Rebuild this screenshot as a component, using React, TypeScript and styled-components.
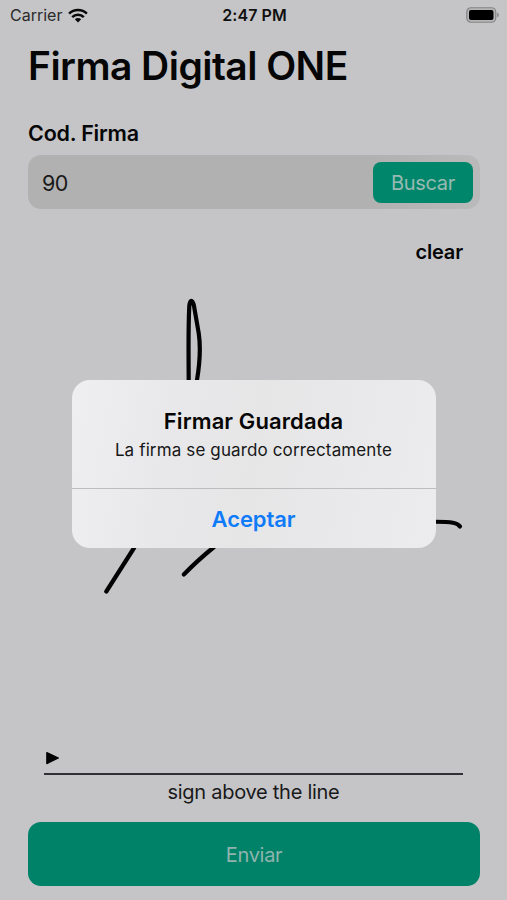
import React from "react";
import styled, { createGlobalStyle } from "styled-components";

const GlobalStyle = createGlobalStyle`
  * { box-sizing: border-box; }
  body {
    margin: 0;
    background: #c5c5c7;
    color: #060607;
    font-family: Inter, "Liberation Sans", sans-serif;
  }
  button, input { font-family: inherit; border: 0; padding: 0; margin: 0; }
`;

const Screen = styled.div`
  position: relative;
  width: 507px;
  height: 900px;
  overflow: hidden;
  display: flex;
  flex-direction: column;
  background: #c5c5c7;
`;

const StatusBar = styled.header`
  height: 30px;
  display: grid;
  grid-template-columns: 1fr auto 1fr;
  align-items: center;
  padding: 0 8px 0 10px;
  font-size: 16px;
  line-height: 20px;
`;

const Carrier = styled.div`
  display: flex;
  align-items: center;
  gap: 6px;
  color: #2b2b2c;
`;

const Clock = styled.div`
  font-weight: 600;
  letter-spacing: 0.05px;
  color: #101011;
`;

const BatterySlot = styled.div`
  display: flex;
  justify-content: flex-end;
`;

const Content = styled.main`
  flex: 1;
  display: flex;
  flex-direction: column;
  padding: 12px 27px 14px 28px;
`;

const Title = styled.h1`
  margin: 0;
  font-size: 39px;
  line-height: 48px;
  font-weight: 600;
  letter-spacing: -0.54px;
  white-space: nowrap;
`;

const Label = styled.label`
  margin-top: 29px;
  font-size: 21.5px;
  line-height: 28px;
  font-weight: 600;
  letter-spacing: -0.2px;
`;

const Field = styled.div`
  margin-top: 8px;
  height: 54px;
  flex: none;
  display: flex;
  align-items: center;
  justify-content: space-between;
  padding: 0 7px 0 14px;
  border-radius: 13px;
  background: linear-gradient(90deg, #b1b1b1 76%, #b9b9ba 98%);
`;

const CodeInput = styled.input`
  width: 200px;
  background: transparent;
  outline: none;
  color: #1a1a1b;
  font-size: 21.5px;
  letter-spacing: -0.5px;
  padding-top: 1px;
`;

const SearchButton = styled.button`
  width: 100px;
  height: 41px;
  padding-top: 1px;
  border-radius: 8px;
  background: #00866b;
  color: #98bab2;
  font-size: 20px;
  letter-spacing: -0.3px;
`;

const SignaturePad = styled.section`
  flex: 1;
  display: flex;
  flex-direction: column;
  padding: 28px 17px 0 16px;
`;

const ClearButton = styled.button`
  align-self: flex-end;
  background: transparent;
  color: #060607;
  font-size: 20px;
  line-height: 28px;
  padding-top: 1px;
  font-weight: 600;
  letter-spacing: -0.15px;
`;

const Canvas = styled.svg`
  display: block;
  width: 419px;
  height: 485px;
  flex: none;
`;

const Marker = styled.svg`
  display: block;
  width: 16px;
  height: 14px;
  flex: none;
`;

const SignLine = styled.div`
  margin-top: 8px;
  height: 2px;
  flex: none;
  background: #303134;
`;

const Hint = styled.p`
  margin: 3px 0 0;
  text-align: center;
  color: #19191a;
  font-size: 20px;
  line-height: 28px;
  letter-spacing: -0.27px;
`;

const SendButton = styled.button`
  flex: none;
  height: 64px;
  padding-top: 1px;
  border-radius: 13px;
  background: #008269;
  color: #8eb4ae;
  font-size: 20px;
  letter-spacing: -0.3px;
`;

const Overlay = styled.div`
  position: absolute;
  inset: 0;
  display: flex;
  align-items: flex-start;
  justify-content: center;
  padding-top: 380px;
`;

const Alert = styled.div`
  width: 364px;
  height: 168px;
  display: flex;
  flex-direction: column;
  overflow: hidden;
  border-radius: 18px;
  background: linear-gradient(100deg, #efeff1 0%, #e8e8ea 28%, #e6e6e7 50%, #e9e9eb 75%, #ececee 100%);
`;

const AlertBody = styled.div`
  height: 109px;
  padding-top: 27px;
  text-align: center;
  border-bottom: 1px solid #bdbdbf;
`;

const AlertTitle = styled.h2`
  margin: 0;
  font-size: 22px;
  line-height: 28px;
  font-weight: 600;
  letter-spacing: 0.1px;
`;

const AlertMessage = styled.p`
  margin: 4px 0 0;
  font-size: 17px;
  line-height: 22px;
  letter-spacing: 0.13px;
  color: #171718;
`;

const AlertAction = styled.button`
  flex: 1;
  background: transparent;
  color: #0f7bf8;
  font-size: 22px;
  font-weight: 600;
  letter-spacing: -0.1px;
`;

const WifiIcon = () => (
  <svg width="20" height="15" viewBox="0 0 21 16" fill="none" stroke="#080808" strokeWidth="2.7">
    <path d="M1 6A13.6 13.6 0 0 1 20 6" />
    <path d="M4.3 9.7A8.8 8.8 0 0 1 16.7 9.7" />
    <path d="M7.1 11.9Q10.5 9.2 13.9 11.9L10.5 15.4Z" fill="#080808" stroke="none" />
  </svg>
);

const BatteryIcon = () => (
  <svg width="33" height="16" viewBox="0 0 33 16">
    <rect x="0.75" y="0.75" width="29" height="14.5" rx="4.2" fill="#b6b6b7" stroke="#858587" strokeWidth="1.2" />
    <rect x="3" y="3" width="24.5" height="10" rx="2" fill="#000" />
    <path d="M31.2 5.8Q32.9 6.3 32.9 8T31.2 10.2Z" fill="#858587" />
  </svg>
);

export default function App() {
  return (
    <>
      <GlobalStyle />
      <Screen>
        <StatusBar>
          <Carrier>
            Carrier
            <WifiIcon />
          </Carrier>
          <Clock>2:47 PM</Clock>
          <BatterySlot>
            <BatteryIcon />
          </BatterySlot>
        </StatusBar>
        <Content>
          <Title>Firma Digital ONE</Title>
          <Label htmlFor="code">Cod. Firma</Label>
          <Field>
            <CodeInput id="code" defaultValue="90" />
            <SearchButton>Buscar</SearchButton>
          </Field>
          <SignaturePad>
            <ClearButton>clear</ClearButton>
            <Canvas
              viewBox="44 266 419 485"
              fill="none"
              stroke="#020202"
              strokeWidth="4.2"
              strokeLinecap="round"
              strokeLinejoin="round"
            >
              <path d="M106.3 591.5L134 548C156 510 178 460 197 380C200 362 200.5 345 198.7 333L194 306C192.5 299 190 299 189.3 306C188 330 188.7 360 188.7 384" />
              <path d="M183.8 574.5C193 565 203 556 214 547" />
              <path d="M430 521.8Q446 521.5 453 522.7Q458 523.5 460 526.5" />
            </Canvas>
            <Marker viewBox="0 0 16 14">
              <path d="M2.8 1.6L14.4 7L2.8 12.6Z" fill="#020202" stroke="#020202" strokeWidth="1.2" strokeLinejoin="round" />
            </Marker>
            <SignLine />
            <Hint>sign above the line</Hint>
          </SignaturePad>
          <SendButton>Enviar</SendButton>
        </Content>
        <Overlay>
          <Alert role="alertdialog" aria-labelledby="alert-title">
            <AlertBody>
              <AlertTitle id="alert-title">Firmar Guardada</AlertTitle>
              <AlertMessage>La firma se guardo correctamente</AlertMessage>
            </AlertBody>
            <AlertAction>Aceptar</AlertAction>
          </Alert>
        </Overlay>
      </Screen>
    </>
  );
}
